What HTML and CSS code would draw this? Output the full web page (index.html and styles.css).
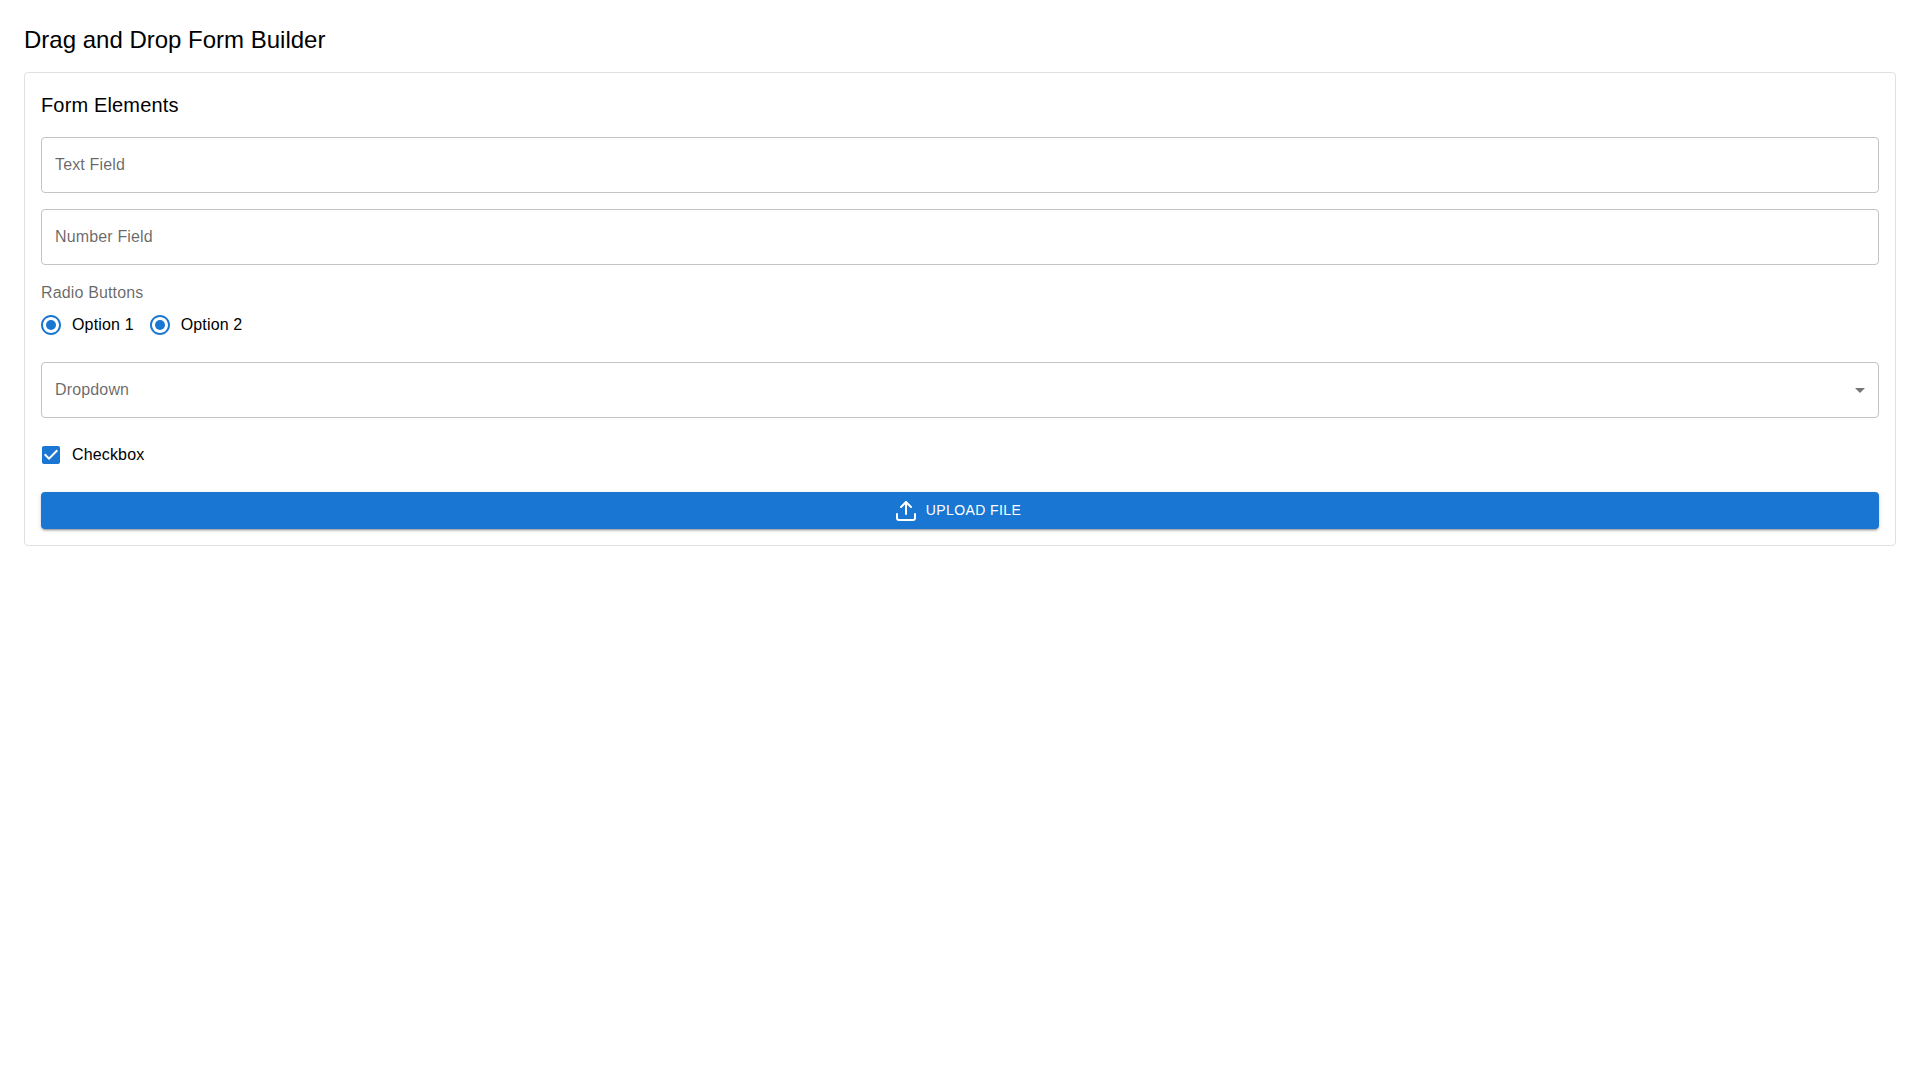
FILE: index.html
```html
<!DOCTYPE html>
<html lang="en">
<head>
<meta charset="utf-8">
<title>Drag and Drop Form Builder</title>
<link rel="stylesheet" href="styles.css">
</head>
<body>
<main class="page">
  <h1 class="page-title">Drag and Drop Form Builder</h1>
  <section class="paper">
    <h2 class="section-title">Form Elements</h2>
    <div class="stack">
      <div class="field"><span class="placeholder">Text Field</span></div>
      <div class="field"><span class="placeholder">Number Field</span></div>
      <div class="radio-group">
        <div class="group-label">Radio Buttons</div>
        <div class="radio-row">
          <label class="choice">
            <span class="control"><svg class="icon" viewBox="0 0 24 24"><path d="M12 2C6.48 2 2 6.48 2 12s4.48 10 10 10 10-4.48 10-10S17.52 2 12 2zm0 18c-4.42 0-8-3.58-8-8s3.58-8 8-8 8 3.58 8 8-3.58 8-8 8z"/><circle cx="12" cy="12" r="5"/></svg></span>
            <span class="choice-text">Option 1</span>
          </label>
          <label class="choice">
            <span class="control"><svg class="icon" viewBox="0 0 24 24"><path d="M12 2C6.48 2 2 6.48 2 12s4.48 10 10 10 10-4.48 10-10S17.52 2 12 2zm0 18c-4.42 0-8-3.58-8-8s3.58-8 8-8 8 3.58 8 8-3.58 8-8 8z"/><circle cx="12" cy="12" r="5"/></svg></span>
            <span class="choice-text">Option 2</span>
          </label>
        </div>
      </div>
      <div class="field"><span class="placeholder">Dropdown</span><svg class="caret" viewBox="0 0 24 24"><path d="M7 10l5 5 5-5z"/></svg></div>
      <label class="choice">
        <span class="control"><svg class="icon" viewBox="0 0 24 24"><path d="M19 3H5c-1.11 0-2 .9-2 2v14c0 1.1.89 2 2 2h14c1.11 0 2-.9 2-2V5c0-1.1-.89-2-2-2zm-9 14l-5-5 1.41-1.41L10 14.17l7.59-7.59L19 8l-9 9z"/></svg></span>
        <span class="choice-text">Checkbox</span>
      </label>
      <button class="upload" type="button">
        <svg class="upload-icon" viewBox="0 0 24 24"><path d="M21 15v4a2 2 0 0 1-2 2H5a2 2 0 0 1-2-2v-4"/><path d="M17 8l-5-5-5 5"/><path d="M12 3v12"/></svg>
        <span class="upload-label">Upload File</span>
      </button>
    </div>
  </section>
</main>
</body>
</html>
```
FILE: styles.css
```css
* { box-sizing: border-box; }
html, body { margin: 0; background: #fff; }
body {
  font-family: "Liberation Sans", Arial, sans-serif;
  color: rgba(0, 0, 0, 0.87);
}
.page { padding: 24px; }
.page-title {
  margin: 0 0 16px;
  font-size: 24px;
  font-weight: 400;
  line-height: 32px;
  color: #000;
}
.paper {
  border: 1px solid #e0e0e0;
  border-radius: 4px;
  padding: 16px;
}
.section-title {
  margin: 0 0 16px;
  font-size: 20px;
  font-weight: 400;
  line-height: 32px;
  letter-spacing: 0.15px;
  color: #000;
}
.stack { display: flex; flex-direction: column; gap: 16px; }
.field {
  display: flex;
  align-items: center;
  justify-content: space-between;
  height: 56px;
  padding: 0 6px 0 13px;
  border: 1px solid #c4c4c4;
  border-radius: 4px;
}
.placeholder {
  font-size: 16px;
  letter-spacing: 0.15px;
  color: rgba(0, 0, 0, 0.6);
}
.caret { width: 24px; height: 24px; fill: rgba(0, 0, 0, 0.54); }
.group-label {
  font-size: 16px;
  line-height: 23px;
  letter-spacing: 0.15px;
  color: rgba(0, 0, 0, 0.6);
}
.radio-row { display: flex; gap: 16px; }
.choice { display: flex; align-items: center; height: 42px; }
.control {
  display: flex;
  width: 42px;
  height: 42px;
  margin: 0 0 0 -11px;
  align-items: center;
  justify-content: center;
}
.icon { width: 24px; height: 24px; fill: #1976d2; }
.choice-text { font-size: 16px; letter-spacing: 0.15px; color: #000; }
.upload {
  display: flex;
  align-items: center;
  justify-content: center;
  gap: 8px;
  height: 37px;
  padding: 0 5px 0 0;
  border: 0;
  border-radius: 4px;
  background: #1976d2;
  color: #fff;
  font: 400 14px/24px "Liberation Sans", Arial, sans-serif;
  letter-spacing: 0.4px;
  text-transform: uppercase;
  box-shadow: 0 3px 1px -2px rgba(0,0,0,.2), 0 2px 2px 0 rgba(0,0,0,.14), 0 1px 5px 0 rgba(0,0,0,.12);
}
.upload-label { margin-bottom: 2px; }
.upload-icon {
  width: 24px;
  height: 24px;
  fill: none;
  stroke: #fff;
  stroke-width: 2;
  stroke-linecap: round;
  stroke-linejoin: round;
}
```
